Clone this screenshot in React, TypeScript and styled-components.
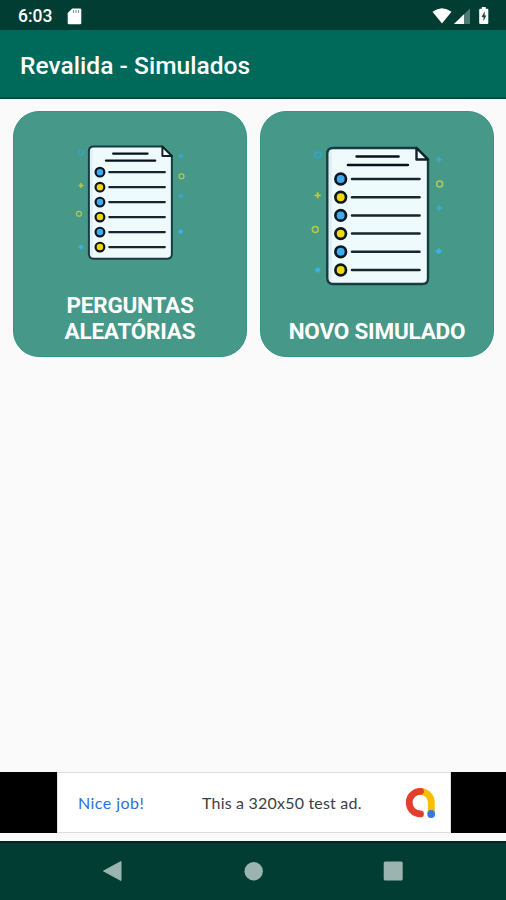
import React from "react";
import styled, { createGlobalStyle } from "styled-components";

const GlobalStyle = createGlobalStyle`
  * { box-sizing: border-box; }
  body { margin: 0; background: #fafafa; }
`;

const Screen = styled.div`
  display: flex;
  flex-direction: column;
  width: 506px;
  height: 900px;
  overflow: hidden;
  background: #fafafa;
  font-family: Roboto, sans-serif;
`;

const StatusBar = styled.header`
  display: flex;
  align-items: center;
  flex: none;
  height: 30px;
  padding: 2px 15px 0 18px;
  background: #013d32;
  color: #fff;
`;

const Clock = styled.span`
  width: 49px;
  font-size: 17.5px;
  font-weight: 500;
  line-height: 20px;
`;

const StatusIcons = styled.div`
  display: flex;
  margin-left: auto;
`;

const AppBar = styled.div`
  display: flex;
  align-items: center;
  flex: none;
  height: 69px;
  padding: 5px 20px 0;
  background: #006a5a;
  border-bottom: 2px solid #01493c;
`;

const Title = styled.h1`
  margin: 0;
  color: #fff;
  font-size: 24.5px;
  font-weight: 500;
  line-height: 30px;
  letter-spacing: 0.04px;
  white-space: nowrap;
`;

const Main = styled.main`
  flex: 1;
  padding: 12px 0 0 13px;
`;

const CardGrid = styled.div`
  display: grid;
  grid-template-columns: 234px 234px;
  gap: 13px;
`;

const Card = styled.button<{ $top: number }>`
  display: flex;
  flex-direction: column;
  align-items: center;
  justify-content: space-between;
  height: 246px;
  padding: ${(p) => p.$top}px 0 12px;
  border: 1px solid #349583;
  border-radius: 26px;
  background: #469888;
  color: #fff;
  font-family: inherit;
`;

const CardLabel = styled.span<{ $width: number }>`
  width: ${(p) => p.$width}px;
  font-size: 22.5px;
  font-weight: 700;
  line-height: 26px;
  letter-spacing: -0.22px;
  text-align: center;
  text-transform: uppercase;
`;

const AdSlot = styled.aside`
  display: flex;
  justify-content: center;
  flex: none;
  height: 61px;
  margin-bottom: 8px;
  background: #000;
`;

const AdBanner = styled.div`
  display: flex;
  align-items: center;
  width: 394px;
  margin-left: 2px;
  padding: 0 14px 0 20px;
  border: 1px solid #dadedd;
  background: #fff;
  font-family: Lato, sans-serif;
  font-size: 16px;
  white-space: nowrap;
`;

const AdPraise = styled.span`
  width: 124px;
  color: #2b70dd;
  letter-spacing: 0.45px;
`;

const AdText = styled.span`
  flex: 1;
  color: #3d4043;
  letter-spacing: 0.2px;
`;

const NavBar = styled.nav`
  display: flex;
  align-items: flex-start;
  justify-content: center;
  gap: 120px;
  flex: none;
  height: 59px;
  padding-top: 18px;
  border-top: 2px solid #01281f;
  background: #013d32;
  color: #9cb4af;
`;

const Icon = styled.svg`
  display: block;
  flex: none;
`;

const INK = "#10232b";
const BLUE = "#3eaaf0";
const YELLOW = "#f7d60c";

const rows = [0, 1, 2, 3, 4, 5];

function Checklist({ width }: { width: number }) {
  return (
    <Icon width={width} height={(width * 152) / 138} viewBox="0 0 138 152" fill="none">
      <path
        d="M25 8H108.500L120 19.500V138.500Q120 144 114.500 144H25Q19.300 144 19.300 138V13.500Q19.300 8 25 8Z"
        fill="#effafd"
        stroke="#173b42"
        strokeWidth="2.400"
      />
      <path d="M22.500 12V140" stroke="#dbeff2" strokeWidth="2.500" />
      <path d="M108.500 8V19.500H120Z" fill="#effafd" stroke={INK} strokeWidth="2.400" strokeLinejoin="round" />
      <path d="M48.700 16.500H90.500M40 25H99.800" stroke="#07111a" strokeWidth="2.700" strokeLinecap="round" />
      {rows.map((i) => {
        const y = 39 + i * 18.2;
        return (
          <g key={i}>
            <circle cx="32.700" cy={y} r="5.300" fill={i % 2 ? YELLOW : BLUE} stroke="#0b1821" strokeWidth="2.700" />
            <path d={`M44 ${y}H111.500`} stroke="#17262c" strokeWidth="2.500" strokeLinecap="round" />
          </g>
        );
      })}
      <g strokeWidth="1.500">
        <circle cx="9.700" cy="15" r="3" stroke="#35a4d0" />
        <circle cx="131.700" cy="44" r="3" stroke="#b3c950" />
        <circle cx="7.300" cy="89.500" r="3" stroke="#b3c950" />
      </g>
      <path d="M9.700 52.300v6M6.700 55.300h6" stroke="#bccb3c" strokeWidth="1.800" />
      <path d="M131 16.500v6M128 19.500h6M131 65v6M128 68h6" stroke="#36a9cf" strokeWidth="1.800" />
      <path d="M130.700 108l3.300 3.300-3.300 3.300-3.300-3.300ZM9.700 126.700l3.200 3.200-3.200 3.200-3.200-3.200Z" fill="#38b3e5" />
    </Icon>
  );
}

function SdCard() {
  return (
    <Icon width="15" height="17" viewBox="0 0 15 17">
      <path d="M5.200 .5H13Q14.300 .5 14.300 1.800V15Q14.300 16.300 13 16.300H2Q.7 16.300 .7 15V5Z" fill="#fff" />
      <path d="M6.500 2.200v2.600M9 2.200v2.600M11.500 2.200v2.600" stroke="#62867f" strokeWidth="1.100" />
    </Icon>
  );
}

function SystemStatus() {
  return (
    <Icon width="60" height="20" viewBox="0 0 60 20">
      <path d="M1.500 5.800Q11 -1.200 20.500 5.800L11 17.500Z" fill="#fff" />
      <path d="M39 2.500V18H23Z" fill="#527a73" />
      <path d="M33 8.300V18H23Z" fill="#fff" />
      <path d="M49.200 2.800H50.800V1H54.700V2.800H56.300Q57.300 2.800 57.300 3.800V17Q57.300 18 56.300 18H49.200Q48.200 18 48.200 17V3.800Q48.200 2.800 49.200 2.800Z" fill="#fff" />
      <path d="M53.700 5.200L50.500 11h2v4.300L55.300 9.400h-1.600Z" fill="#1c4a40" />
    </Icon>
  );
}

function AdMobLogo() {
  return (
    <Icon width="32" height="32" viewBox="0 0 32 32" fill="none" strokeWidth="6.800" strokeLinecap="round">
      <path d="M16.500 4.300A11 11 0 0 1 27.300 15.300V26" stroke="#fbbc04" />
      <path d="M16.500 4.300A11.300 11.300 0 0 0 16.500 26.900" stroke="#e43e2f" />
      <circle cx="27.200" cy="27" r="3.900" fill="#3478e0" />
    </Icon>
  );
}

export default function App() {
  return (
    <>
      <GlobalStyle />
      <Screen>
        <StatusBar>
          <Clock>6:03</Clock>
          <SdCard />
          <StatusIcons>
            <SystemStatus />
          </StatusIcons>
        </StatusBar>
        <AppBar>
          <Title>Revalida - Simulados</Title>
        </AppBar>
        <Main>
          <CardGrid>
            <Card $top={28}>
              <Checklist width={113.7} />
              <CardLabel $width={160}>Perguntas Aleatórias</CardLabel>
            </Card>
            <Card $top={28}>
              <Checklist width={138} />
              <CardLabel $width={220}>Novo Simulado</CardLabel>
            </Card>
          </CardGrid>
        </Main>
        <AdSlot>
          <AdBanner>
            <AdPraise>Nice job!</AdPraise>
            <AdText>This a 320x50 test ad.</AdText>
            <AdMobLogo />
          </AdBanner>
        </AdSlot>
        <NavBar>
          <Icon width="20" height="22" viewBox="0 0 20 22">
            <path d="M18 .5V19.500L.500 10Z" fill="currentColor" stroke="currentColor" strokeLinejoin="round" />
          </Icon>
          <Icon width="20" height="20" viewBox="0 0 20 20">
            <circle cx="10.700" cy="10.200" r="9.200" fill="currentColor" />
          </Icon>
          <Icon width="20" height="20" viewBox="0 0 20 20">
            <rect x=".7" y=".5" width="19" height="19" rx="1.500" fill="currentColor" />
          </Icon>
        </NavBar>
      </Screen>
    </>
  );
}
